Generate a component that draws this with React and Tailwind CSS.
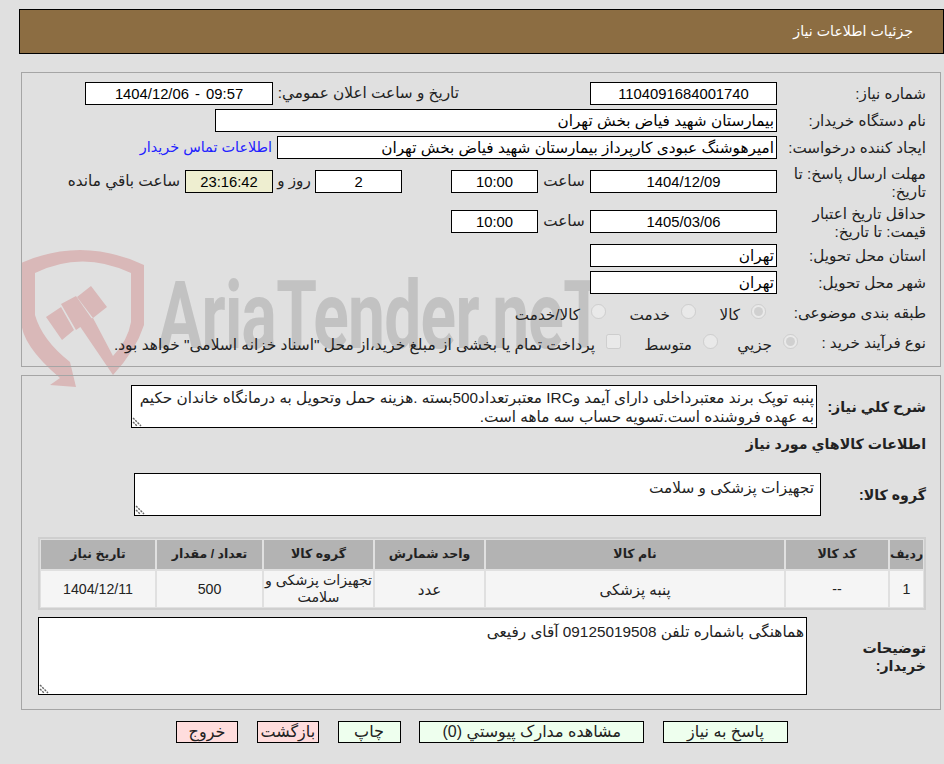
const font = "font-['Liberation_Sans','DejaVu_Sans',sans-serif]";
const box = "h-[23px] border border-black bg-white text-black outline-none px-[2px]";

function Label({ className = "w-[149px]", children }) {
  return <div className={"shrink-0 pl-1 text-right text-[15.2px] leading-[18px] text-[#222] " + className}>{children}</div>;
}

function Box({ value, className = "", center }) {
  if (center) {
    return <input readOnly dir="ltr" value={value} className={box + " text-center text-[14.8px] [word-spacing:2px] " + className} />;
  }
  return <input readOnly value={value} className={box + " text-right text-[15.3px] " + className} />;
}

function Area({ value, className = "", pad = "" }) {
  return (
    <div className={"relative shrink-0 " + className}>
      <textarea
        readOnly
        defaultValue={value}
        className={"block h-full w-full resize-none overflow-hidden border border-black bg-white pl-[2px] text-right text-[15.3px] leading-[19px] text-[#222] outline-none " + pad}
      />
      <svg width="10" height="10" viewBox="0 0 10 10" className="absolute bottom-[1px] left-[1px]">
        <path d="M1 1 L9 9 M1 5 L5 9" stroke="#666" strokeWidth="1.4" strokeDasharray="2.2 1" fill="none" />
      </svg>
    </div>
  );
}

function Choice({ type = "radio", checked, name, label, width = "", textClass = "text-[15.2px]" }) {
  return (
    <div className={"flex items-center gap-[11px] " + width}>
      <input type={type} name={name} disabled defaultChecked={checked} className="-mt-[4px] h-[15px] w-[15px] shrink-0 m-0 opacity-70" />
      <span className={"mt-[4px] whitespace-nowrap " + textClass}>{label}</span>
    </div>
  );
}

function Watermark() {
  return (
    <div className="absolute left-0 top-0 h-[400px] w-[600px] pointer-events-none" dir="ltr">
      <svg width="160" height="400" viewBox="0 0 160 400" className="absolute left-0 top-0">
        <path d="M21 263 Q82 236 144 265 L144 325 Q136 350 113 375 L77 322 L93 318 L113 356 Q128 340 131 322 L131 273 Q82 250 35 273 L35 315 Q42 340 70 362 L76 387 L50 385 L60 378 Q21 345 21 320 Z" fill="#d9b8b8" />
        <path d="M46 317 L61 307 L74 330 L62 340 Z M61 304 L76 296 L92 319 L76 330 Z M77 297 L91 286 L107 307 L93 318 Z" fill="#d9b8b8" />
      </svg>
      <div className="absolute left-[158px] top-[266px] origin-left scale-x-[0.7] whitespace-nowrap font-['Roboto',sans-serif] text-[94px] font-bold leading-[100px] tracking-[-1px] text-[#c2c2c2]">
        AriaTender.neT
      </div>
    </div>
  );
}

const widths = ["w-[33px]", "w-[102px]", "w-[298px]", "w-[109px]", "w-[109px]", "w-[105px]", "w-[114px]"];
const heads = ["رديف", "کد کالا", "نام کالا", "واحد شمارش", "گروه کالا", "تعداد / مقدار", "تاريخ نياز"];
const cells = [
  { text: "1", size: "text-[14.2px]" },
  { text: "--", size: "text-[14.2px]" },
  { text: "پنبه پزشکی", size: "text-[15px]" },
  { text: "عدد", size: "text-[15px]" },
  { text: <>تجهیزات پزشکی و<br />سلامت</>, size: "text-[14.2px] whitespace-nowrap" },
  { text: "500", size: "text-[14.2px]" },
  { text: "1404/12/11", size: "text-[14.2px]" },
];

export default function App() {
  return (
    <div dir="rtl" className={"relative min-h-[764px] overflow-hidden bg-[#e0e0e0] pt-[9px] text-[#222] " + font}>
      <Watermark />
      <div className="ml-[19px] flex h-[45px] items-center border border-black bg-[#8c6d42] pr-[30px] pt-px text-[14.2px] text-white">
        جزئیات اطلاعات نیاز
      </div>

      <section className="relative ml-[21px] mr-[3px] mt-[18px] h-[295px] border border-[#a5a5a5] pr-[14px] pt-[9px]">
        <div className="flex h-[23px] items-center">
          <Label>شماره نیاز:</Label>
          <Box center value="1104091684001740" className="w-[187px]" />
          <div className="mr-[131px] w-[182px] whitespace-nowrap text-[15.3px]">تاريخ و ساعت اعلان عمومي:</div>
          <Box center value="1404/12/06 - 09:57" className="mr-[4px] w-[188px]" />
        </div>
        <div className="mt-[4px] flex h-[23px] items-center">
          <Label>نام دستگاه خریدار:</Label>
          <Box value="بیمارستان شهید فیاض بخش تهران" className="w-[562px]" />
        </div>
        <div className="mt-[4px] flex h-[23px] items-center">
          <Label>ایجاد کننده درخواست:</Label>
          <Box value="امیرهوشنگ عبودی کارپرداز بیمارستان شهید فیاض بخش تهران" className="w-[500px]" />
          <a className="mr-[5px] mt-[1px] whitespace-nowrap text-[14.4px] text-[#2222ff]">اطلاعات تماس خریدار</a>
        </div>
        <div className="mt-[11px] flex h-[23px] items-center">
          <Label className="mt-[3px] w-[149px]">مهلت ارسال پاسخ: تا تاریخ:</Label>
          <Box center value="1404/12/09" className="w-[187px]" />
          <div className="w-[52px] text-center text-[15.2px]">ساعت</div>
          <Box center value="10:00" className="w-[87px]" />
          <div className="w-[49px]" />
          <Box center value="2" className="w-[87px]" />
          <div className="w-[42px] text-center text-[15.2px]">روز و</div>
          <Box center value="23:16:42" className="w-[88px] !bg-[#eeeed0]" />
          <div className="mr-[5px] whitespace-nowrap text-[15.3px]">ساعت باقي مانده</div>
        </div>
        <div className="mt-[17px] flex h-[23px] items-center">
          <Label className="mt-[3px] w-[149px]">حداقل تاریخ اعتبار قیمت: تا تاریخ:</Label>
          <Box center value="1405/03/06" className="w-[187px]" />
          <div className="w-[52px] text-center text-[15.2px]">ساعت</div>
          <Box center value="10:00" className="w-[87px]" />
        </div>
        <div className="mt-[11px] flex h-[23px] items-center">
          <Label>استان محل تحویل:</Label>
          <Box value="تهران" className="w-[187px]" />
        </div>
        <div className="mt-[4px] flex h-[23px] items-center">
          <Label>شهر محل تحویل:</Label>
          <Box value="تهران" className="w-[187px]" />
        </div>
        <div className="mt-[8px] flex h-[22px] items-center">
          <Label className="w-[160px]">طبقه بندی موضوعی:</Label>
          <div className="flex items-center">
            <Choice name="cat" checked label="کالا" width="w-[70px]" />
            <Choice name="cat" label="خدمت" width="w-[90px]" />
            <Choice name="cat" label="کالا/خدمت" />
          </div>
        </div>
        <div className="mt-[8px] flex h-[22px] items-center">
          <Label className="w-[128px]">نوع فرآیند خرید :</Label>
          <div className="flex items-center">
            <Choice name="proc" checked label="جزیي" width="w-[80px]" />
            <Choice name="proc" label="متوسط" width="w-[97px]" />
            <Choice type="checkbox" textClass="text-[15.45px]" label={'پرداخت تمام یا بخشی از مبلغ خرید،از محل "اسناد خزانه اسلامی" خواهد بود.'} />
          </div>
        </div>
      </section>

      <section className="relative ml-[21px] mr-[3px] mt-[8px] h-[335px] border border-[#a5a5a5] pr-[14px] pt-[9px]">
        <div className="flex items-center">
          <div className="mt-[2px] w-[109px] shrink-0 whitespace-nowrap text-[14.2px] font-bold">شرح کلي نياز:</div>
          <Area
            value="پنبه توپک برند معتبرداخلی دارای آیمد وIRC معتبرتعداد500بسته .هزینه حمل وتحویل به درمانگاه خاندان حکیم به عهده فروشنده است.تسویه حساب سه ماهه است."
            className="h-[43px] w-[686px]"
            pad="pr-[2px] pt-[2px]"
          />
        </div>
        <div className="mt-[7px] text-[14.2px] font-bold leading-[18px]">اطلاعات کالاهاي مورد نياز</div>
        <div className="mt-[20px] flex items-center">
          <div className="mt-[3px] w-[105px] shrink-0 text-[14.2px] font-bold">گروه کالا:</div>
          <Area value="تجهیزات پزشکی و سلامت" className="h-[43px] w-[687px]" pad="pr-[6px] pt-[4px]" />
        </div>
        <div className="mt-[21px] w-[888px] border-2 border-[#cfcfcf] p-px">
          <div className="flex gap-[2px]">
            {heads.map((h, i) => (
              <div key={h} className={"flex h-[29px] items-center justify-center bg-[#b3b3b3] text-[12.5px] font-bold " + widths[i]}>{h}</div>
            ))}
          </div>
          <div className="mt-[2px] flex gap-[2px]">
            {cells.map((c, i) => (
              <div key={i} className={"flex h-[36px] items-center justify-center bg-[#f5f5f5] text-center leading-[17px] " + c.size + " " + widths[i]}>{c.text}</div>
            ))}
          </div>
        </div>
        <div className="mt-[7px] flex items-center">
          <div className="mt-[2px] w-[119px] shrink-0 text-[14.2px] font-bold leading-[18px]"><div className="w-[66px]">توضیحات خریدار:</div></div>
          <Area value="هماهنگی باشماره تلفن 09125019508 آقای رفیعی" className="h-[78px] w-[769px]" pad="pr-[2px] pt-[4px]" />
        </div>
      </section>

      <div className="ml-[176px] mr-[156px] mt-[11px] flex justify-between text-[16px]">
        <button className="h-[22px] w-[125px] border border-black bg-[#eeffee] leading-none">پاسخ به نیاز</button>
        <button className="h-[22px] w-[225px] border border-black bg-[#eeffee] leading-none">مشاهده مدارک پیوستي (0)</button>
        <button className="h-[22px] w-[63px] border border-black bg-[#eeffee] leading-none">چاپ</button>
        <button className="h-[22px] w-[62px] border border-black bg-[#ffdddd] leading-none">بازگشت</button>
        <button className="h-[22px] w-[62px] border border-black bg-[#ffdddd] leading-none">خروج</button>
      </div>
    </div>
  );
}
